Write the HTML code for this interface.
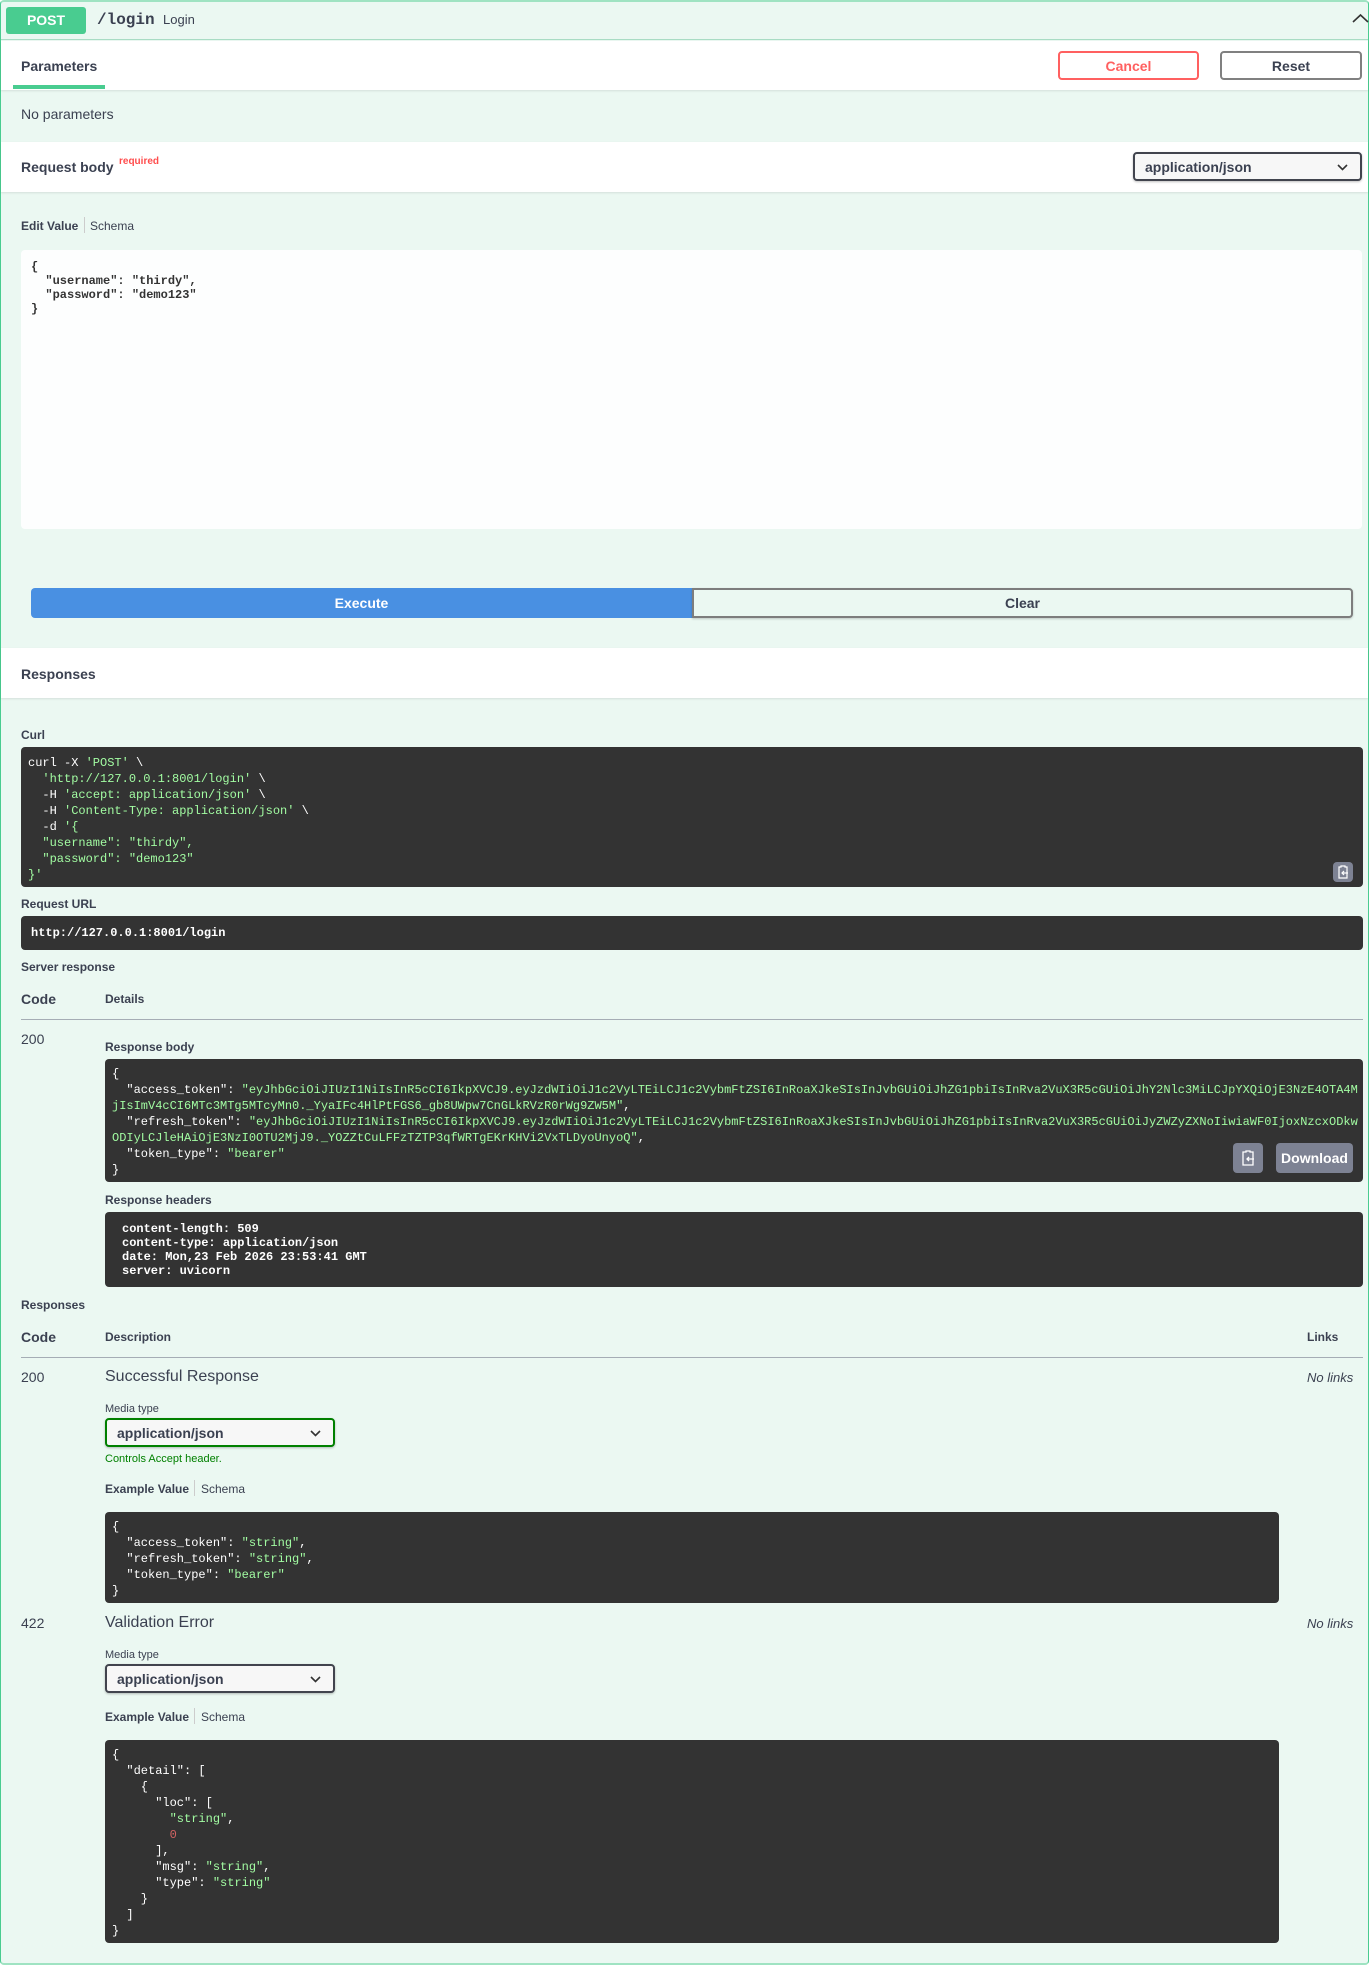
<!DOCTYPE html>
<html><head><meta charset="utf-8"><style>
*{margin:0;padding:0;box-sizing:border-box}
body{width:1369px;height:1965px;background:#fff;font-family:"Liberation Sans",Arial,sans-serif;color:#3b4151;position:relative;overflow:hidden}
.a{position:absolute;white-space:pre}
.box{position:absolute;left:0;top:0;width:1369px;height:1965px;background:#ebf8f2;border:1px solid #49cc90;border-top:2px solid #9fe3c2;border-bottom:2px solid #9fe3c2;border-radius:4px}
.wh{position:absolute;left:1px;width:1367px;background:#fff;box-shadow:0 1px 2px rgba(0,0,0,.1)}
.b{font-weight:bold}
.mono{font-family:"Liberation Mono","DejaVu Sans Mono",monospace}
.blk{position:absolute;background:#333;border-radius:4px;color:#fff;font-family:"Liberation Mono",monospace;font-size:12px;line-height:16px;white-space:pre;overflow:hidden}
.g{color:#a2fca2}.r{color:#d36363}
.sel{position:absolute;border:2px solid #41444e;border-radius:4px;background:#f7f7f7;font-weight:bold;font-size:14px;box-shadow:0 1px 2px rgba(0,0,0,.25)}
.sel span{position:absolute;left:10px;top:5px}
.sel svg{position:absolute;right:12px;top:10px}
.btn{position:absolute;border-radius:4px;font-weight:bold;font-size:14px;text-align:center;line-height:26px}
</style></head><body>
<div class="box"></div>
<div class="a" style="left:1px;top:39px;width:1367px;height:1px;background:#a8dcc4"></div>
<div class="a" style="left:6px;top:7px;width:80px;height:27px;background:#49cc90;border-radius:3px;color:#fff;font-weight:bold;font-size:14px;text-align:center;line-height:27px">POST</div>
<div class="a mono b" style="left:97px;top:9px;font-size:16px;line-height:22px;color:#3b4151">/login</div>
<div class="a" style="left:163px;top:12px;font-size:13px;line-height:16px">Login</div>
<svg class="a" style="left:1352px;top:12px" width="17" height="12" viewBox="0 0 17 12"><path d="M1 10 L8.5 3 L16 10" fill="none" stroke="#333" stroke-width="1.6"/></svg>

<div class="wh" style="top:41px;height:49px"></div>
<div class="a b" style="left:21px;top:58px;font-size:14px;line-height:16px">Parameters</div>
<div class="a" style="left:13px;top:85px;width:92px;height:4px;background:#49cc90"></div>
<div class="btn" style="left:1058px;top:51px;width:141px;height:29px;border:2px solid #ff6060;color:#ff6060;background:#fff">Cancel</div>
<div class="btn" style="left:1220px;top:51px;width:142px;height:29px;border:2px solid #808080;color:#3b4151;background:#fff">Reset</div>
<div class="a" style="left:21px;top:106px;font-size:14px;line-height:16px">No parameters</div>

<div class="wh" style="top:142px;height:50px"></div>
<div class="a b" style="left:21px;top:159px;font-size:14px;line-height:16px">Request body</div>
<div class="a b" style="left:119px;top:156px;font-size:10px;color:#ff4d4d">required</div>
<div class="sel" style="left:1133px;top:152px;width:229px;height:29px"><span>application/json</span><svg width="11" height="7" viewBox="0 0 11 7"><path d="M1 1 L5.5 5.5 L10 1" fill="none" stroke="#333" stroke-width="1.6"/></svg></div>

<div class="a b" style="left:21px;top:219px;font-size:12px;line-height:14px">Edit Value</div>
<div class="a" style="left:84px;top:217px;width:1px;height:16px;background:#ccc"></div>
<div class="a" style="left:90px;top:219px;font-size:12px;line-height:14px">Schema</div>
<div class="a mono" style="left:21px;top:250px;width:1341px;height:279px;background:#fdfefe;border-radius:4px;font-size:12px;line-height:14px;padding:10px 10px;color:#333;font-weight:bold">{
  "username": "thirdy",
  "password": "demo123"
}</div>

<div class="btn" style="left:31px;top:588px;width:661px;height:30px;background:#4990e2;color:#fff;border-radius:4px 0 0 4px;line-height:30px">Execute</div>
<div class="btn" style="left:692px;top:588px;width:661px;height:30px;border:2px solid #7d7d7d;color:#3b4151;background:#ebf8f2;border-radius:0 4px 4px 0;line-height:26px;box-shadow:0 1px 2px rgba(0,0,0,.2)">Clear</div>

<div class="wh" style="top:648px;height:50px"></div>
<div class="a b" style="left:21px;top:666px;font-size:14px;line-height:16px">Responses</div>

<div class="a b" style="left:21px;top:728px;font-size:12px;line-height:14px">Curl</div>
<div class="blk" style="left:21px;top:747px;width:1342px;height:140px;padding:8px 7px;font-weight:normal">curl -X <span class="g">'POST'</span> \
  <span class="g">'http://127.0.0.1:8001/login'</span> \
  -H <span class="g">'accept: application/json'</span> \
  -H <span class="g">'Content-Type: application/json'</span> \
  -d <span class="g">'{
  "username": "thirdy",
  "password": "demo123"
}'</span></div>
<div class="a" style="left:1333px;top:862px;width:20px;height:20px;background:#7d8293;border-radius:4px"><svg width="20" height="20" viewBox="0 0 20 20"><path d="M6 5h2v-1h4v1h2v11h-8z" fill="none" stroke="#fff" stroke-width="1.2"/><path d="M9 11h6M11 9l-2 2 2 2" fill="none" stroke="#fff" stroke-width="1.2"/></svg></div>

<div class="a b" style="left:21px;top:897px;font-size:12px;line-height:14px">Request URL</div>
<div class="blk b" style="left:21px;top:916px;width:1342px;height:34px;padding:9px 10px;font-weight:bold">http://127.0.0.1:8001/login</div>

<div class="a b" style="left:21px;top:960px;font-size:12px;line-height:14px">Server response</div>
<div class="a b" style="left:21px;top:991px;font-size:14px;line-height:16px">Code</div>
<div class="a b" style="left:105px;top:992px;font-size:12px;line-height:14px">Details</div>
<div class="a" style="left:21px;top:1019px;width:1342px;height:1px;background:#a5adb5"></div>
<div class="a" style="left:21px;top:1031px;font-size:14px;line-height:16px">200</div>
<div class="a b" style="left:105px;top:1040px;font-size:12px;line-height:14px">Response body</div>
<div class="blk" style="left:105px;top:1059px;width:1258px;height:123px;padding:7px 7px">{
  "access_token": <span class="g">"eyJhbGciOiJIUzI1NiIsInR5cCI6IkpXVCJ9.eyJzdWIiOiJ1c2VyLTEiLCJ1c2VybmFtZSI6InRoaXJkeSIsInJvbGUiOiJhZG1pbiIsInRva2VuX3R5cGUiOiJhY2Nlc3MiLCJpYXQiOjE3NzE4OTA4M
jIsImV4cCI6MTc3MTg5MTcyMn0._YyaIFc4HlPtFGS6_gb8UWpw7CnGLkRVzR0rWg9ZW5M"</span>,
  "refresh_token": <span class="g">"eyJhbGciOiJIUzI1NiIsInR5cCI6IkpXVCJ9.eyJzdWIiOiJ1c2VyLTEiLCJ1c2VybmFtZSI6InRoaXJkeSIsInJvbGUiOiJhZG1pbiIsInRva2VuX3R5cGUiOiJyZWZyZXNoIiwiaWF0IjoxNzcxODkw
ODIyLCJleHAiOjE3NzI0OTU2MjJ9._YOZZtCuLFFzTZTP3qfWRTgEKrKHVi2VxTLDyoUnyoQ"</span>,
  "token_type": <span class="g">"bearer"</span>
}</div>
<div class="a" style="left:1233px;top:1143px;width:30px;height:30px;background:#7d8293;border-radius:4px"><svg width="30" height="30" viewBox="0 0 30 30"><path d="M10 9h3v-1h4v1h3v13h-10z" fill="none" stroke="#fff" stroke-width="1.3"/><path d="M14 16h7M16 14l-2 2 2 2" fill="none" stroke="#fff" stroke-width="1.3"/></svg></div>
<div class="btn" style="left:1276px;top:1143px;width:77px;height:30px;background:#7d8293;color:#fff;line-height:30px;font-size:14px">Download</div>

<div class="a b" style="left:105px;top:1193px;font-size:12px;line-height:14px">Response headers</div>
<div class="blk" style="left:105px;top:1212px;width:1258px;height:75px;padding:10px 17px;line-height:14px;font-weight:bold">content-length: 509
content-type: application/json
date: Mon,23 Feb 2026 23:53:41 GMT
server: uvicorn</div>

<div class="a b" style="left:21px;top:1298px;font-size:12px;line-height:14px">Responses</div>
<div class="a b" style="left:21px;top:1329px;font-size:14px;line-height:16px">Code</div>
<div class="a b" style="left:105px;top:1330px;font-size:12px;line-height:14px">Description</div>
<div class="a b" style="left:1307px;top:1330px;font-size:12px;line-height:14px">Links</div>
<div class="a" style="left:21px;top:1357px;width:1342px;height:1px;background:#a5adb5"></div>

<div class="a" style="left:21px;top:1369px;font-size:14px;line-height:16px">200</div>
<div class="a" style="left:105px;top:1367px;font-size:16px;line-height:19px">Successful Response</div>
<div class="a" style="left:1307px;top:1370px;font-size:13px;line-height:15px;font-style:italic">No links</div>
<div class="a" style="left:105px;top:1403px;font-size:11px;line-height:13px">Media type</div>
<div class="sel" style="left:105px;top:1418px;width:230px;height:29px;border-color:#008000"><span>application/json</span><svg width="11" height="7" viewBox="0 0 11 7"><path d="M1 1 L5.5 5.5 L10 1" fill="none" stroke="#333" stroke-width="1.6"/></svg></div>
<div class="a" style="left:105px;top:1453px;font-size:11px;line-height:13px;color:#008000">Controls Accept header.</div>
<div class="a b" style="left:105px;top:1482px;font-size:12px;line-height:14px">Example Value</div>
<div class="a" style="left:194px;top:1480px;width:1px;height:16px;background:#ccc"></div>
<div class="a" style="left:201px;top:1482px;font-size:12px;line-height:14px">Schema</div>
<div class="blk" style="left:105px;top:1512px;width:1174px;height:91px;padding:7px 7px">{
  "access_token": <span class="g">"string"</span>,
  "refresh_token": <span class="g">"string"</span>,
  "token_type": <span class="g">"bearer"</span>
}</div>

<div class="a" style="left:21px;top:1615px;font-size:14px;line-height:16px">422</div>
<div class="a" style="left:105px;top:1613px;font-size:16px;line-height:19px">Validation Error</div>
<div class="a" style="left:1307px;top:1616px;font-size:13px;line-height:15px;font-style:italic">No links</div>
<div class="a" style="left:105px;top:1649px;font-size:11px;line-height:13px">Media type</div>
<div class="sel" style="left:105px;top:1664px;width:230px;height:29px"><span>application/json</span><svg width="11" height="7" viewBox="0 0 11 7"><path d="M1 1 L5.5 5.5 L10 1" fill="none" stroke="#333" stroke-width="1.6"/></svg></div>
<div class="a b" style="left:105px;top:1710px;font-size:12px;line-height:14px">Example Value</div>
<div class="a" style="left:194px;top:1708px;width:1px;height:16px;background:#ccc"></div>
<div class="a" style="left:201px;top:1710px;font-size:12px;line-height:14px">Schema</div>
<div class="blk" style="left:105px;top:1740px;width:1174px;height:203px;padding:7px 7px">{
  "detail": [
    {
      "loc": [
        <span class="g">"string"</span>,
        <span class="r">0</span>
      ],
      "msg": <span class="g">"string"</span>,
      "type": <span class="g">"string"</span>
    }
  ]
}</div>
</body></html>
